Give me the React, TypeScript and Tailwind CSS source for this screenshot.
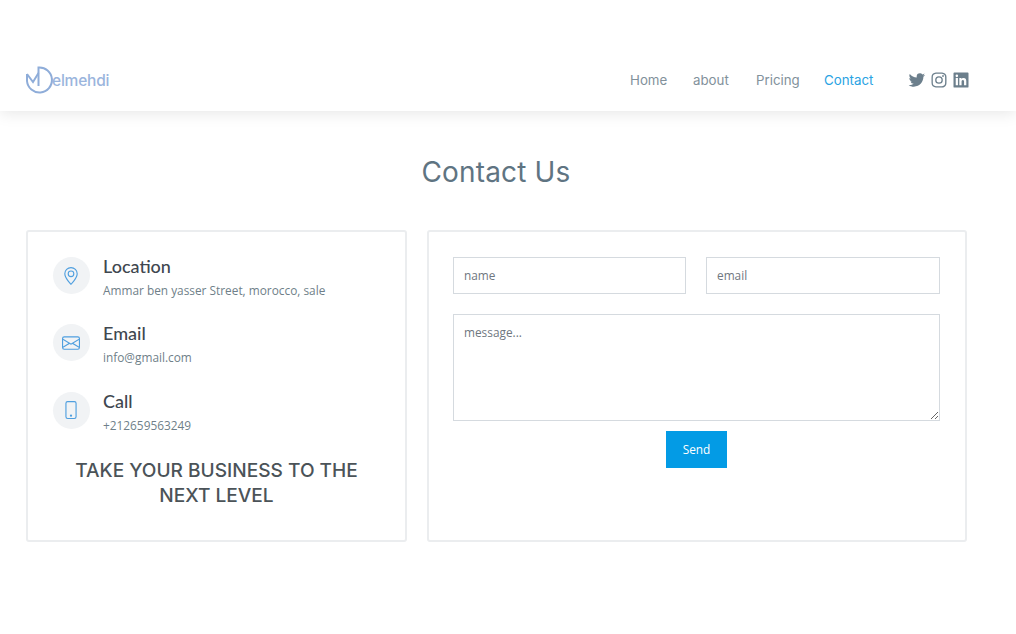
import React from 'react';
import { BsGeoAlt, BsEnvelope, BsPhone } from 'react-icons/bs';
import { BiLogoTwitter, BiLogoInstagram, BiLogoLinkedinSquare } from 'react-icons/bi';

const links = [
  { label: 'Home', width: 'w-[38px]', active: false },
  { label: 'about', width: 'w-[38px]', active: false },
  { label: 'Pricing', width: 'w-[43px]', active: false },
  { label: 'Contact', width: 'w-[51px]', active: true },
];

const info = [
  { title: 'Location', text: 'Ammar ben yasser Street, morocco, sale', icon: BsGeoAlt },
  { title: 'Email', text: 'info@gmail.com', icon: BsEnvelope },
  { title: 'Call', text: '+212659563249', icon: BsPhone },
];

const Logo = () => (
  <svg width="28" height="28" viewBox="0 0 28 28" fill="none" stroke="#8fadd9" strokeWidth="2">
    <path d="M1 8 V15 A12.5 12.5 0 1 0 12.5 1.5 V20" />
    <path d="M1 8 L7 16 L12.5 7" />
  </svg>
);

const App: React.FC = () => {
  return (
    <div className="min-h-[634px] bg-white font-['Open_Sans',sans-serif]">
      <header className="h-[111px] pt-[50px] bg-white shadow-[0_2px_15px_rgba(0,0,0,0.1)]">
        <div className="w-[992px] pl-[26px] pr-[21px] h-[60px] flex items-center justify-between">
          <a className="flex items-center">
            <Logo />
            <span className="mt-[2px] text-[15.5px] font-medium text-[#9bb5dd] font-['Inter',sans-serif] tracking-[-0.2px] -ml-[2px]">elmehdi</span>
          </a>
          <nav className="flex items-center">
            {links.map((l) => (
              <a
                key={l.label}
                className={`${l.width} mr-[25px] pt-[1px] whitespace-nowrap text-[13.3px] font-['Inter',sans-serif] ${l.active ? 'text-[#2aa3e3]' : 'text-[#82919b]'}`}
              >
                {l.label}
              </a>
            ))}
            <div className="flex items-center ml-[7px] gap-[2px] text-[#6c7f8c]">
              <BiLogoTwitter size={20} />
              <BiLogoInstagram size={20} />
              <BiLogoLinkedinSquare size={20} />
            </div>
          </nav>
        </div>
      </header>

      <main className="w-[992px] px-[26px]">
        <h2 className="mt-[41px] text-center text-[28px] leading-[40px] tracking-[0.15px] text-[#5f7482] font-['Inter',sans-serif]">Contact Us</h2>

        <div className="mt-[38px] flex gap-[20px]">
          <div className="w-[381px] h-[312px] shrink-0 border-2 border-[#ebedef] rounded-[3px] px-[25px] pt-[25px]">
            {info.map((item) => (
              <div key={item.title} className="flex h-[67.4px]">
                <div className="w-[37px] h-[37px] pr-[1px] rounded-full bg-[#f1f3f5] flex items-center justify-center text-[#4f9fdf]">
                  <item.icon size={18} />
                </div>
                <div className="ml-[13px] -mt-[3px]">
                  <h4 className="text-[18px] leading-[24px] font-medium text-[#40474f] font-['Lato',sans-serif]">{item.title}</h4>
                  <p className="mt-[2px] text-[11.85px] leading-[20px] text-[#6f7f89]">{item.text}</p>
                </div>
              </div>
            ))}
            <p className="-mt-[1px] text-center text-[19.1px] leading-[25px] font-medium text-[#4b5358] font-['Inter',sans-serif] uppercase">
              Take your business to the next level
            </p>
          </div>

          <form className="w-[540px] h-[312px] shrink-0 border-2 border-[#ebedef] rounded-[3px] pl-[24px] pr-[25px] pt-[25px]">
            <div className="flex gap-[20px]">
              <input
                placeholder="name"
                className="w-[233px] h-[37px] border border-[#d5dadf] px-[10px] pb-[1px] text-[11.85px] outline-none placeholder:text-[#6f7780]"
              />
              <input
                placeholder="email"
                className="w-[234px] h-[37px] border border-[#d5dadf] px-[10px] pb-[1px] text-[11.85px] outline-none placeholder:text-[#6f7780]"
              />
            </div>
            <textarea
              placeholder="message..."
              className="block mt-[20px] w-[487px] h-[107px] border border-[#d5dadf] px-[10px] py-[9px] text-[11.85px] outline-none placeholder:text-[#6f7780]"
            />
            <div className="mt-[10px] flex justify-center">
              <button type="button" className="w-[61px] h-[37px] pt-[1px] bg-[#039be5] text-white text-[11.85px]">Send</button>
            </div>
          </form>
        </div>
      </main>
    </div>
  );
};

export default App;
